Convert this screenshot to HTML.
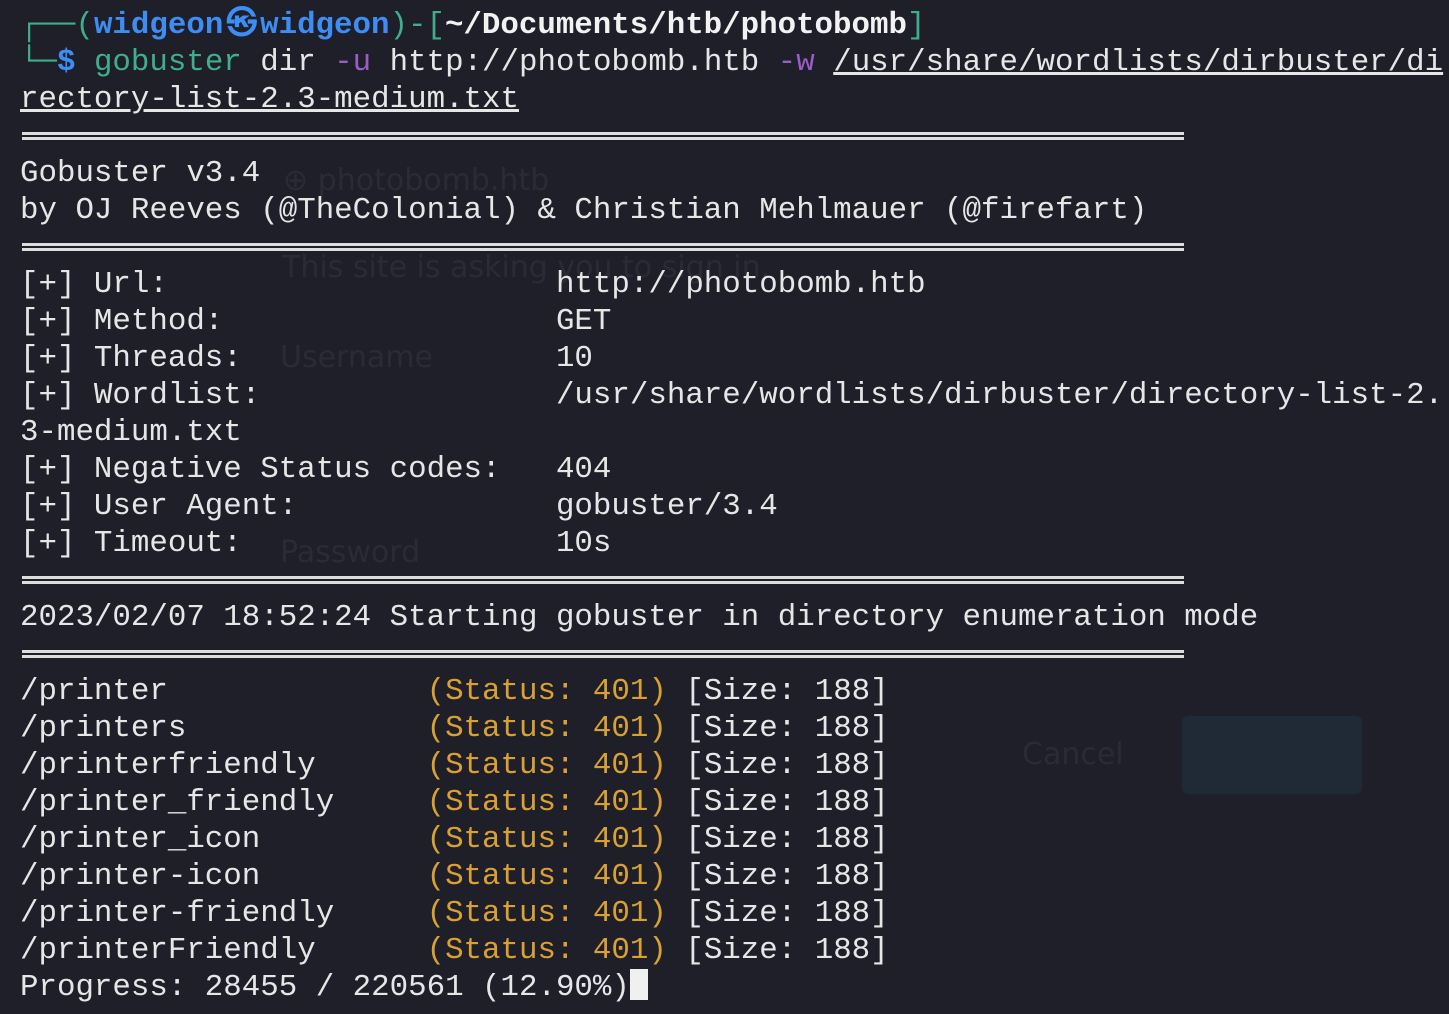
<!DOCTYPE html>
<html><head><meta charset="utf-8"><style>
html,body{margin:0;padding:0;background:#1e1f29;width:1449px;height:1014px;overflow:hidden}
pre{margin:0;position:absolute;left:20px;top:7px;font-family:"Liberation Mono","DejaVu Sans Mono",monospace;font-size:30.8px;line-height:37px;color:#e6e6e6;white-space:pre}
.g{color:#3fae8c}.b{color:#3d8df5;font-weight:bold}.w{font-weight:bold;color:#f2f2f2}.p{color:#9a5cc6}.u{text-decoration:underline}
.o{color:#d9a033}
.sep{display:inline-block;width:1162px;height:8px;border-top:3px solid #ddd;border-bottom:3px solid #ddd;box-sizing:border-box;vertical-align:middle;margin-left:2px}
.cur{display:inline-block;width:18px;height:31px;background:#f0f0f0;vertical-align:-5px}
.ghost{position:absolute;font-family:"DejaVu Sans",sans-serif;color:#2a2b35;font-size:30px}
.k{margin:0 3px}
</style></head><body>
<div class="ghost" style="left:283px;top:163px">⊕ photobomb.htb</div>
<div class="ghost" style="left:282px;top:250px">This site is asking you to sign in.</div>
<div class="ghost" style="left:280px;top:340px">Username</div>
<div class="ghost" style="left:280px;top:535px">Password</div>
<div class="ghost" style="left:1022px;top:737px">Cancel</div>
<div style="position:absolute;left:1182px;top:716px;width:180px;height:78px;background:#1f2a36;border-radius:6px"></div>
<pre><span class="g">┌──(</span><span class="b">widgeon<span class="k">㉿</span>widgeon</span><span class="g">)-[</span><span class="w">~/Documents/htb/photobomb</span><span class="g">]</span>
<span class="g">└─</span><span class="b">$</span> <span class="g">gobuster</span> dir <span class="p">-u</span> http://photobomb.htb <span class="p">-w</span> <span class="u">/usr/share/wordlists/dirbuster/di</span>
<span class="u">rectory-list-2.3-medium.txt</span>
<span class="sep"></span>
Gobuster v3.4
by OJ Reeves (@TheColonial) &amp; Christian Mehlmauer (@firefart)
<span class="sep"></span>
[+] Url:                     http://photobomb.htb
[+] Method:                  GET
[+] Threads:                 10
[+] Wordlist:                /usr/share/wordlists/dirbuster/directory-list-2.
3-medium.txt
[+] Negative Status codes:   404
[+] User Agent:              gobuster/3.4
[+] Timeout:                 10s
<span class="sep"></span>
2023/02/07 18:52:24 Starting gobuster in directory enumeration mode
<span class="sep"></span>
/printer              <span class="o">(Status: 401)</span> [Size: 188]
/printers             <span class="o">(Status: 401)</span> [Size: 188]
/printerfriendly      <span class="o">(Status: 401)</span> [Size: 188]
/printer_friendly     <span class="o">(Status: 401)</span> [Size: 188]
/printer_icon         <span class="o">(Status: 401)</span> [Size: 188]
/printer-icon         <span class="o">(Status: 401)</span> [Size: 188]
/printer-friendly     <span class="o">(Status: 401)</span> [Size: 188]
/printerFriendly      <span class="o">(Status: 401)</span> [Size: 188]
Progress: 28455 / 220561 (12.90%)<span class="cur"></span></pre>
</body></html>
